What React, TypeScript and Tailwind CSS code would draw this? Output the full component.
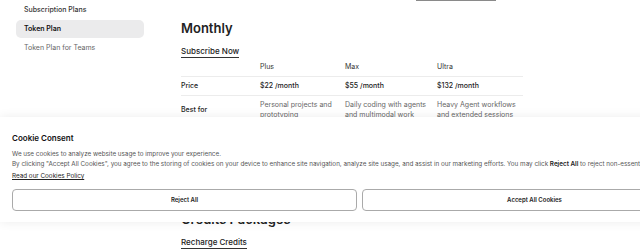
import { ReactNode } from 'react';

const font = { fontFamily: 'Inter, "Liberation Sans", sans-serif' };

const plans = [
  { name: 'Plus', price: '$22 /month', best: 'Personal projects and prototyping' },
  { name: 'Max', price: '$55 /month', best: 'Daily coding with agents and multimodal work' },
  { name: 'Ultra', price: '$132 /month', best: 'Heavy Agent workflows and extended sessions' },
];

function Row({ label, cells, last }: { label: string; cells: ReactNode[]; last?: boolean }) {
  return (
    <div
      className={`grid grid-cols-[79px_85px_92px_86px] items-center ${
        last ? '' : 'border-b border-[#ececec]'
      }`}>
      <div className="py-[4px] text-[7px] font-medium leading-[10px] text-[#222]">{label}</div>
      {cells.map((c, i) => (
        <div key={i} className="py-[4px] text-[7px] leading-[10px] text-[#333]">
          {c}
        </div>
      ))}
    </div>
  );
}

export default function App() {
  return (
    <div className="relative h-[251px] w-[640px] overflow-hidden bg-white text-[8px] leading-[10px]" style={font}>
      <div className="flex">
        <aside className="ml-4 w-[128px] shrink-0 pt-[5px]">
          <p className="px-2 text-[7px] font-medium leading-[9px] text-[#333]">
            Subscription Plans
          </p>
          <div className="mt-[6px] flex h-[18px] items-center rounded-[5px] bg-[#ebebec] px-2 text-[7px] font-semibold text-[#111]">
            Token Plan
          </div>
          <p className="mt-[5px] px-2 text-[7px] leading-[10px] text-[#666]">Token Plan for Teams</p>
        </aside>

        <main className="ml-[37px] w-[342px]">
          <div className="ml-[235px] h-[1px] w-[80px] bg-[#8a8a8a]" />
          <h1 className="mt-[19px] text-[13px] font-semibold leading-[16px] text-[#222]">
            Monthly
          </h1>
          <a className="mt-[10px] block w-fit border-b border-[#333] pb-[1px] text-[8px] font-medium leading-[10px] text-[#222]">
            Subscribe Now
          </a>
          <div>
            <Row label="" cells={plans.map(p => p.name)} />
            <Row label="Price" cells={plans.map(p => <span className="font-medium text-[#222]">{p.price}</span>)} />
            <Row label="Best for" cells={plans.map(p => <span className="text-[#666]">{p.best}</span>)} last />
          </div>
          <div className="mt-[87px]">
            <h2 className="text-[13px] font-semibold leading-[16px] text-[#222]">Credits Packages</h2>
            <a className="mt-[10px] block w-fit border-b border-[#333] pb-[1px] text-[8px] font-medium leading-[10px] text-[#222]">
              Recharge Credits
            </a>
          </div>
        </main>
      </div>

      <div className="absolute left-0 top-[117px] w-[720px] bg-white px-3 pb-[11px] pt-[16px] shadow-[0_0_10px_rgba(0,0,0,0.08)]">
        <h3 className="text-[8px] font-semibold leading-[10px] text-[#111]">Cookie Consent</h3>
        <p className="mt-[6px] text-[6.3px] leading-[10px] text-[#555]">
          We use cookies to analyze website usage to improve your experience.
        </p>
        <p className="whitespace-nowrap text-[6.3px] leading-[10px] text-[#555]">
          By clicking "Accept All Cookies", you agree to the storing of cookies on your device to
          enhance site navigation, analyze site usage, and assist in our marketing efforts. You may
          click <b className="font-semibold text-[#222]">Reject All</b> to reject non-essential
          cookies.
        </p>
        <a className="mt-[2px] block w-fit text-[6.3px] leading-[10px] text-[#222] underline">
          Read our Cookies Policy
        </a>
        <div className="mt-[8px] flex gap-[5px]">
          <button className="h-[22px] w-[345px] rounded-[4px] border border-[#aaa] text-[6px] font-semibold text-[#222]">
            Reject All
          </button>
          <button className="h-[22px] w-[345px] rounded-[4px] border border-[#aaa] text-[6px] font-semibold text-[#222]">
            Accept All Cookies
          </button>
        </div>
      </div>
    </div>
  );
}
